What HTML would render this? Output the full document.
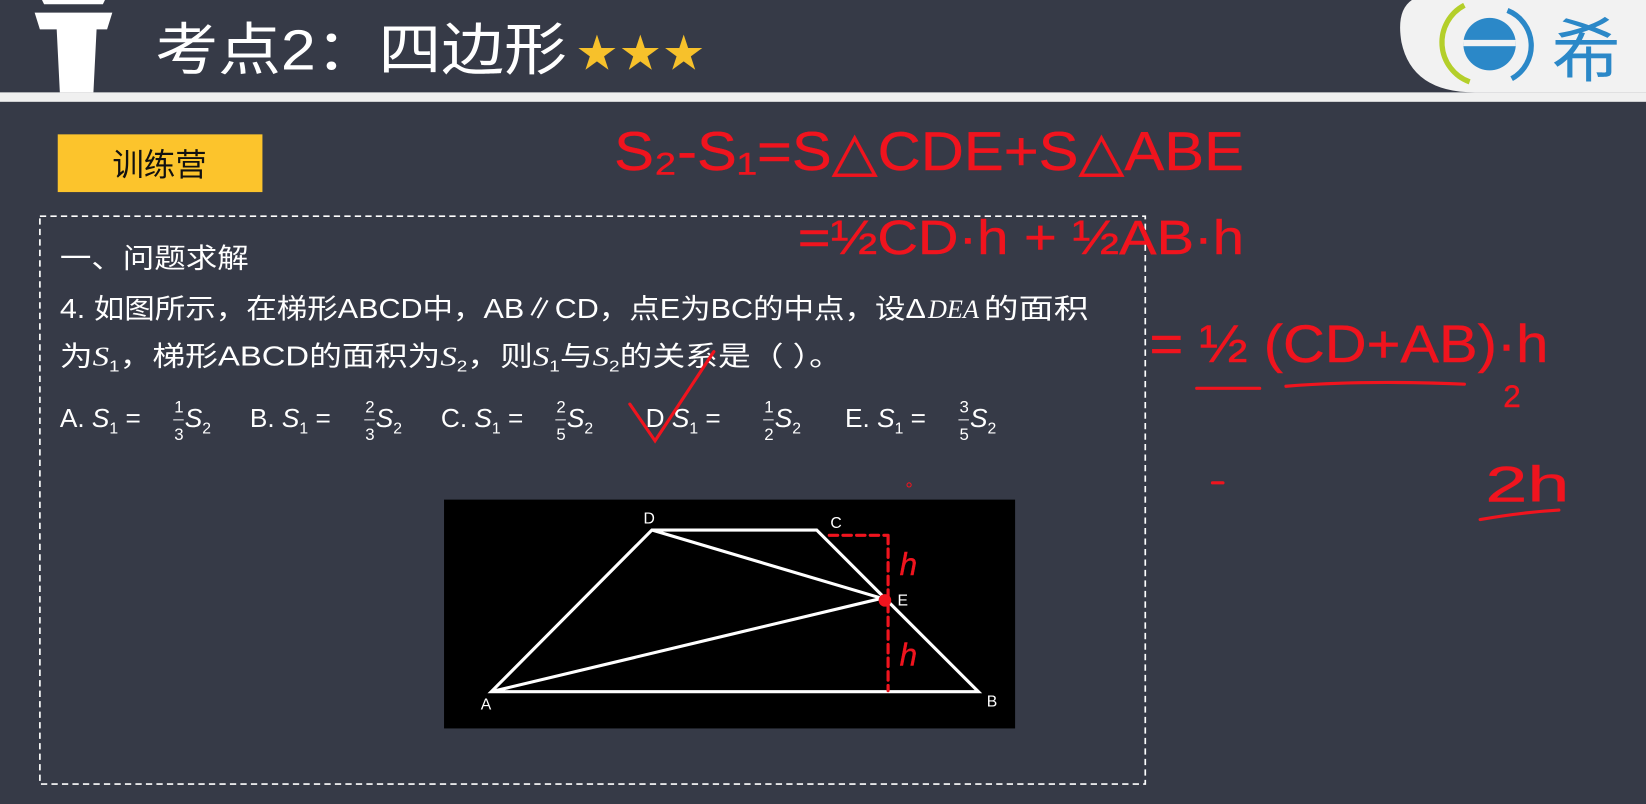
<!DOCTYPE html>
<html><head><meta charset="utf-8"><style>
html,body{margin:0;padding:0;background:#363a47;overflow:hidden}
svg{display:block}
.t{font-family:"Liberation Sans","Noto Sans CJK SC",sans-serif;fill:#fff}
.m{font-family:"Liberation Serif","Noto Serif CJK SC",serif;font-style:italic;fill:#fff}
.r{font-family:"Liberation Sans",sans-serif;fill:#f0141e;stroke:#f0141e;stroke-width:0.4}
</style></head><body>
<svg width="1646" height="804" viewBox="0 0 1568 766" preserveAspectRatio="none" xmlns="http://www.w3.org/2000/svg">
<rect width="1568" height="766" fill="#363a47"/>
<rect x="0" y="88" width="1568" height="9" fill="#f0f0f0"/>
<path d="M1345 0 H1568 V88 H1405 Q1345 88 1335 40 Q1330 10 1345 0Z" fill="#f2f2f2"/>
<circle cx="1419" cy="42" r="25" fill="#2b88c8"/>
<rect x="1394" y="38" width="50" height="6" fill="#f2f2f2"/>
<path d="M1436 10 A36 36 0 0 1 1440 75" stroke="#2b88c8" stroke-width="5" fill="none"/>
<path d="M1395 5 A40 40 0 0 0 1400 78" stroke="#b4cf2a" stroke-width="5" fill="none"/>
<text x="1478" y="72" class="t" style="fill:#2b88c8;font-size:66px">希</text>
<path d="M40 0 H100 L98 4 H42Z M33 12 H107 L102 28 H92 L89 88 H57 L54 28 H38Z" fill="#fff"/>
<text x="148" y="66" class="t" font-size="54" textLength="392" lengthAdjust="spacingAndGlyphs">考点2：四边形</text>
<text x="548" y="66" font-size="46" fill="#f7c12b" font-family="DejaVu Sans" textLength="124" lengthAdjust="spacingAndGlyphs">★★★</text>
<rect x="55" y="128" width="195" height="55" fill="#fcc42c"/>
<text x="152" y="167" class="t" text-anchor="middle" font-size="30" style="fill:#111">训练营</text>
<rect x="38" y="206" width="1053" height="541" fill="none" stroke="#fff" stroke-width="1.6" stroke-dasharray="6,4"/>
<text x="57" y="255" class="t" font-size="26" textLength="180" lengthAdjust="spacingAndGlyphs">一、问题求解</text>
<text x="57" y="303" class="t" font-size="26" textLength="825" lengthAdjust="spacingAndGlyphs">4. 如图所示，在梯形ABCD中，AB∥CD，点E为BC的中点，设Δ</text>
<text x="884" y="303" class="m" font-size="25">DEA</text>
<text x="937" y="303" class="t" font-size="26" textLength="100" lengthAdjust="spacingAndGlyphs">的面积</text>
<text x="57" y="348" class="t" font-size="26" textLength="745" lengthAdjust="spacingAndGlyphs">为<tspan class="m">S</tspan><tspan font-size="15" dy="6">1</tspan><tspan dy="-6">，梯形ABCD的面积为</tspan><tspan class="m">S</tspan><tspan font-size="15" dy="6">2</tspan><tspan dy="-6">，则</tspan><tspan class="m">S</tspan><tspan font-size="15" dy="6">1</tspan><tspan dy="-6">与</tspan><tspan class="m">S</tspan><tspan font-size="15" dy="6">2</tspan><tspan dy="-6">的关系是（ ）。</tspan></text>
<g class="t" font-size="25">
<text x="57" y="407">A. <tspan font-style="italic">S</tspan><tspan font-size="15" dy="6">1</tspan><tspan dy="-6"> = </tspan></text>
<text x="238" y="407">B. <tspan font-style="italic">S</tspan><tspan font-size="15" dy="6">1</tspan><tspan dy="-6"> = </tspan></text>
<text x="420" y="407">C. <tspan font-style="italic">S</tspan><tspan font-size="15" dy="6">1</tspan><tspan dy="-6"> = </tspan></text>
<text x="615" y="407">D <tspan font-style="italic">S</tspan><tspan font-size="15" dy="6">1</tspan><tspan dy="-6"> = </tspan></text>
<text x="805" y="407">E. <tspan font-style="italic">S</tspan><tspan font-size="15" dy="6">1</tspan><tspan dy="-6"> = </tspan></text>
</g>
<g class="t" font-size="16">
<text x="166" y="393">1</text><text x="166" y="419">3</text><text x="176" y="407" font-size="25" font-style="italic">S<tspan font-size="15" dy="6" font-style="normal">2</tspan></text>
<text x="348" y="393">2</text><text x="348" y="419">3</text><text x="358" y="407" font-size="25" font-style="italic">S<tspan font-size="15" dy="6" font-style="normal">2</tspan></text>
<text x="530" y="393">2</text><text x="530" y="419">5</text><text x="540" y="407" font-size="25" font-style="italic">S<tspan font-size="15" dy="6" font-style="normal">2</tspan></text>
<text x="728" y="393">1</text><text x="728" y="419">2</text><text x="738" y="407" font-size="25" font-style="italic">S<tspan font-size="15" dy="6" font-style="normal">2</tspan></text>
<text x="914" y="393">3</text><text x="914" y="419">5</text><text x="924" y="407" font-size="25" font-style="italic">S<tspan font-size="15" dy="6" font-style="normal">2</tspan></text>
</g>
<g stroke="#fff" stroke-width="1"><path d="M165 400h10M347 400h10M529 400h10M727 400h10M913 400h10"/></g>
<rect x="423" y="476" width="544" height="218" fill="#000"/>
<g stroke="#fff" stroke-width="3" fill="none">
<path d="M468 659 L621 505 L778 505 L932 659 Z M621 505 L840 570 L468 659"/>
</g>
<g class="t" font-size="15"><text x="613" y="499">D</text><text x="791" y="503">C</text><text x="855" y="577">E</text><text x="940" y="673">B</text><text x="458" y="676">A</text></g>
<g stroke="#f0141e" stroke-width="3" fill="none" stroke-linecap="round">
<path d="M790 510 H846 M846 510 V658" stroke-dasharray="8,5"/>
<path d="M600 385 L624 420 L680 335"/>
<path d="M1140 370 H1200 M1225 368 Q1300 362 1395 366 M1410 495 Q1450 488 1485 486 M1155 460 h10"/>
</g>
<circle cx="843" cy="572" r="6" fill="#f0141e"/>
<circle cx="866" cy="462" r="2" fill="none" stroke="#f0141e"/>
<g class="r">
<text x="857" y="548" font-size="30" font-style="italic">h</text>
<text x="857" y="634" font-size="30" font-style="italic">h</text>
<text x="585" y="162" font-size="52" textLength="600" lengthAdjust="spacingAndGlyphs">S₂-S₁=S△CDE+S△ABE</text>
<text x="760" y="242" font-size="46" textLength="425" lengthAdjust="spacingAndGlyphs">=½CD·h + ½AB·h</text>
<text x="1095" y="345" font-size="50" textLength="380" lengthAdjust="spacingAndGlyphs">= ½ (CD+AB)·h</text>
<text x="1432" y="388" font-size="30">2</text>
<text x="1415" y="478" font-size="48" textLength="80" lengthAdjust="spacingAndGlyphs">2h</text>
</g>
</svg>
</body></html>
